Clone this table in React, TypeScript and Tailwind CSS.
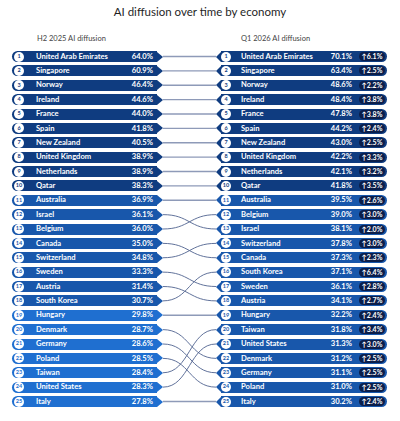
import React from "react";

const leftData: [string, string][] = [
  ["United Arab Emirates", "64.0%"],
  ["Singapore", "60.9%"],
  ["Norway", "46.4%"],
  ["Ireland", "44.6%"],
  ["France", "44.0%"],
  ["Spain", "41.8%"],
  ["New Zealand", "40.5%"],
  ["United Kingdom", "38.9%"],
  ["Netherlands", "38.9%"],
  ["Qatar", "38.3%"],
  ["Australia", "36.9%"],
  ["Israel", "36.1%"],
  ["Belgium", "36.0%"],
  ["Canada", "35.0%"],
  ["Switzerland", "34.8%"],
  ["Sweden", "33.3%"],
  ["Austria", "31.4%"],
  ["South Korea", "30.7%"],
  ["Hungary", "29.8%"],
  ["Denmark", "28.7%"],
  ["Germany", "28.6%"],
  ["Poland", "28.5%"],
  ["Taiwan", "28.4%"],
  ["United States", "28.3%"],
  ["Italy", "27.8%"],
];

const rightData: [string, string, string][] = [
  ["United Arab Emirates", "70.1%", "6.1%"],
  ["Singapore", "63.4%", "2.5%"],
  ["Norway", "48.6%", "2.2%"],
  ["Ireland", "48.4%", "3.8%"],
  ["France", "47.8%", "3.8%"],
  ["Spain", "44.2%", "2.4%"],
  ["New Zealand", "43.0%", "2.5%"],
  ["United Kingdom", "42.2%", "3.3%"],
  ["Netherlands", "42.1%", "3.2%"],
  ["Qatar", "41.8%", "3.5%"],
  ["Australia", "39.5%", "2.6%"],
  ["Belgium", "39.0%", "3.0%"],
  ["Israel", "38.1%", "2.0%"],
  ["Switzerland", "37.8%", "3.0%"],
  ["Canada", "37.3%", "2.3%"],
  ["South Korea", "37.1%", "6.4%"],
  ["Sweden", "36.1%", "2.8%"],
  ["Austria", "34.1%", "2.7%"],
  ["Hungary", "32.2%", "2.4%"],
  ["Taiwan", "31.8%", "3.4%"],
  ["United States", "31.3%", "3.0%"],
  ["Denmark", "31.2%", "2.5%"],
  ["Germany", "31.1%", "2.5%"],
  ["Poland", "31.0%", "2.5%"],
  ["Italy", "30.2%", "2.4%"],
];

// left rank -> right rank
const mapping = [1, 2, 3, 4, 5, 6, 7, 8, 9, 10, 11, 13, 12, 15, 14, 17, 18, 16, 19, 22, 23, 24, 20, 21, 25];

type Tone = { bg: string; triL: string; triR: string; num: string };
const DARK: Tone = {
  bg: "bg-[#0f3c80]",
  triL: "border-l-[#0f3c80]",
  triR: "border-r-[#0f3c80]",
  num: "text-[#0f3c80]",
};
const MED: Tone = {
  bg: "bg-[#1857ab]",
  triL: "border-l-[#1857ab]",
  triR: "border-r-[#1857ab]",
  num: "text-[#1857ab]",
};
const BRIGHT: Tone = {
  bg: "bg-[#1f6fd0]",
  triL: "border-l-[#1f6fd0]",
  triR: "border-r-[#1f6fd0]",
  num: "text-[#1f6fd0]",
};

const ROW_H = 11;
const STEP = 14.375;
const font = { fontFamily: "Lato, 'Noto Sans', sans-serif" };

function Badge({ n, tone }: { n: number; tone: Tone }) {
  return (
    <div
      className={`w-[10px] h-[10px] shrink-0 rounded-full bg-white flex items-center justify-center text-[5.5px] font-bold leading-none ${tone.num}`}
    >
      {n}
    </div>
  );
}

function LeftRow({ i, name, value }: { i: number; name: string; value: string }) {
  const tone = i < 10 ? DARK : i < 18 ? MED : BRIGHT;
  return (
    <div className="flex items-center h-[11px]">
      <div className={`flex-1 h-[11px] rounded-l-full flex items-center pl-[2px] pr-[4px] ${tone.bg}`}>
        <Badge n={i + 1} tone={tone} />
        <span className="ml-[12px] flex-1 text-white text-[7.6px] font-bold leading-none whitespace-nowrap">{name}</span>
        <span className="text-white text-[7.6px] font-bold leading-none">{value}</span>
      </div>
      <div className={`w-0 h-0 border-y-[5.5px] border-y-transparent border-l-[6px] ${tone.triL}`} />
    </div>
  );
}

function RightRow({ i, name, value, delta }: { i: number; name: string; value: string; delta: string }) {
  const tone = i < 10 ? DARK : MED;
  return (
    <div className="flex items-center h-[11px]">
      <div className={`w-0 h-0 border-y-[5.5px] border-y-transparent border-r-[5px] ${tone.triR}`} />
      <div className={`flex-1 h-[11px] rounded-r-full flex items-center pl-[0px] pr-[2px] ${tone.bg}`}>
        <Badge n={i + 1} tone={tone} />
        <span className="ml-[10px] flex-1 text-white text-[7.6px] font-bold leading-none whitespace-nowrap">{name}</span>
        <span className="text-white text-[7.6px] font-bold leading-none">{value}</span>
        <span className="ml-[7px] w-[26px] h-[9px] rounded-full bg-[#0b1e4a] text-white text-[7px] font-bold leading-none flex items-center justify-center">
          ↑{delta}
        </span>
      </div>
    </div>
  );
}

function Connectors() {
  const W = 53;
  const H = 356;
  return (
    <svg width={W} height={H} viewBox={`0 0 ${W} ${H}`} className="shrink-0">
      {mapping.map((r, i) => {
        const y1 = ROW_H / 2 + i * STEP;
        const y2 = ROW_H / 2 + (r - 1) * STEP;
        const d = `M0 ${y1} C ${W / 2} ${y1}, ${W / 2} ${y2}, ${W} ${y2}`;
        return (
          <path
            key={i}
            d={d}
            fill="none"
            stroke={y1 === y2 ? "#8e9ab8" : "#4f628f"}
            strokeWidth={y1 === y2 ? 1.4 : 0.9}
          />
        );
      })}
    </svg>
  );
}

export default function App() {
  return (
    <div className="w-[400px] h-[421px] bg-white overflow-hidden" style={font}>
      <div className="mt-[3px] h-[18px] leading-[18px] text-center text-[11.5px] text-[#1f1f1f]">
        AI diffusion over time by economy
      </div>
      <div className="mt-[12px] flex h-[11px] leading-[11px] text-[7.5px] text-[#444]">
        <div className="ml-[37px] w-[204px]">H2 2025 AI diffusion</div>
        <div>Q1 2026 AI diffusion</div>
      </div>
      <div className="mt-[7px] flex ml-[12px]">
        <div className="w-[151px] flex flex-col gap-[3.375px]">
          {leftData.map(([n, v], i) => (
            <LeftRow key={i} i={i} name={n} value={v} />
          ))}
        </div>
        <Connectors />
        <div className="w-[171px] flex flex-col gap-[3.375px]">
          {rightData.map(([n, v, d], i) => (
            <RightRow key={i} i={i} name={n} value={v} delta={d} />
          ))}
        </div>
      </div>
    </div>
  );
}
